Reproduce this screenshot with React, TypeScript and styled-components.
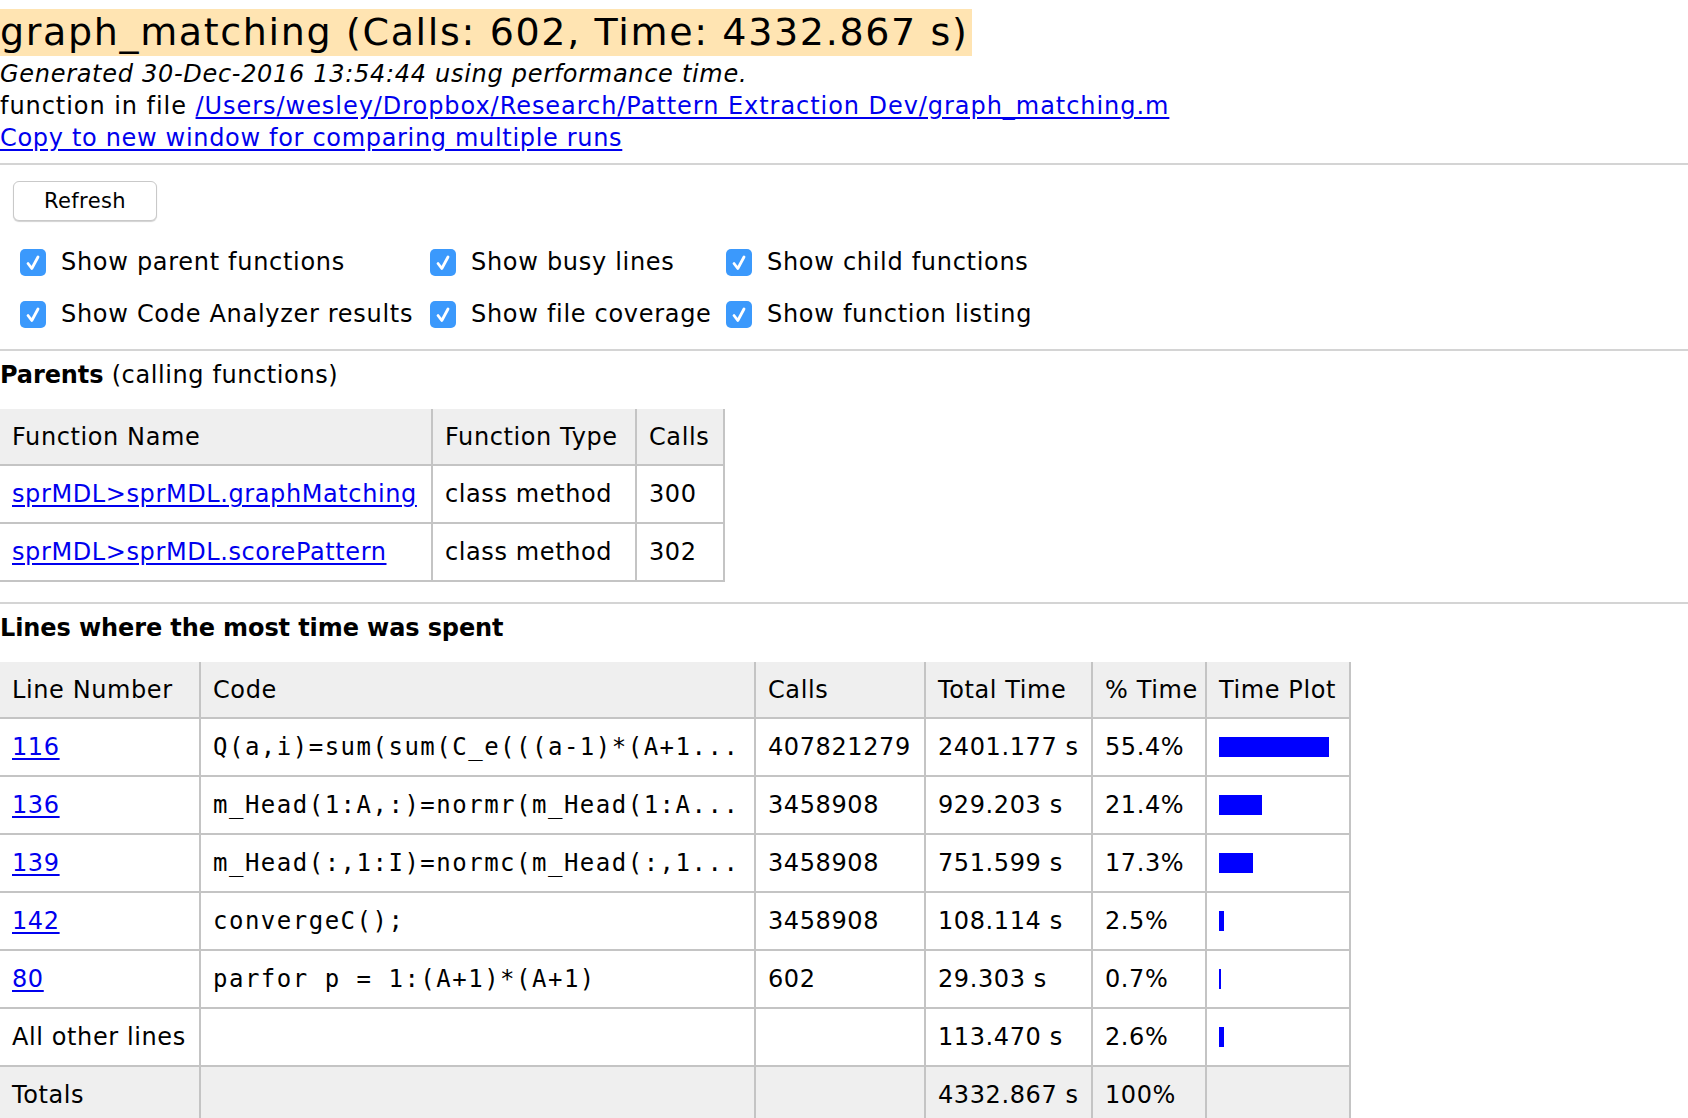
import React from "react";
import styled, { createGlobalStyle } from "styled-components";

const GlobalStyle = createGlobalStyle`
  html, body {
    margin: 0;
    padding: 0;
    background: #ffffff;
  }
  body {
    font-family: "DejaVu Sans", "Lucida Grande", sans-serif;
    font-size: 24px;
    letter-spacing: 0.6px;
    color: #000000;
  }
`;

const Page = styled.div`
  width: 1688px;
`;

const Title = styled.h1`
  margin: 9px 0 2px;
  font-weight: normal;
  font-size: 38px;
  line-height: 47px;
  letter-spacing: 1.65px;
`;

const Highlight = styled.span`
  display: inline-block;
  background: #ffe4b2;
  padding-right: 3px;
`;

const InfoLine = styled.div<{ $italic?: boolean; $spacing?: number }>`
  line-height: 32px;
  font-style: ${(p) => (p.$italic ? "italic" : "normal")};
  letter-spacing: ${(p) => p.$spacing ?? 0.6}px;
  white-space: nowrap;
`;

const Link = styled.a`
  color: #0000ee;
  text-decoration: underline;
  text-underline-offset: 3px;
  cursor: pointer;
`;

const Divider = styled.hr<{ $top?: number }>`
  margin: ${(p) => p.$top ?? 9}px 0 0;
  border: none;
  height: 2px;
  background: #d4d4d4;
`;

const Toolbar = styled.div`
  padding: 16px 0 21px 13px;
`;

const Button = styled.button`
  width: 144px;
  height: 40px;
  background: #ffffff;
  border: 1px solid #c9c9c9;
  border-radius: 6px;
  box-shadow: 0 1px 1px rgba(0, 0, 0, 0.18);
  font-family: "DejaVu Sans", sans-serif;
  font-size: 21px;
  letter-spacing: 0.4px;
  color: #000;
  padding: 0;
`;

const Options = styled.div`
  margin: 27px 0 0 7px;
  display: grid;
  grid-template-columns: 410px 296px auto;
  grid-auto-rows: 28px;
  row-gap: 24px;
`;

const Option = styled.label`
  display: flex;
  align-items: center;
  gap: 15px;
  white-space: nowrap;
  letter-spacing: 0.7px;
`;

const CheckBox = () => (
  <svg width="26" height="27" viewBox="0 0 26 27" aria-hidden>
    <rect x="0" y="0" width="26" height="27" rx="5" fill="#3b99fc" />
    <path
      d="M8 14.5 L11.8 19.5 L18 8"
      fill="none"
      stroke="#ffffff"
      strokeWidth="2.8"
      strokeLinecap="round"
      strokeLinejoin="round"
    />
  </svg>
);

const SectionHeading = styled.div`
  margin: 8px 0 18px;
  line-height: 32px;
  white-space: nowrap;
`;

const Bold = styled.b`
  font-weight: bold;
  letter-spacing: -0.1px;
`;

const Table = styled.table<{ $width: number }>`
  border-collapse: collapse;
  table-layout: fixed;
  width: ${(p) => p.$width}px;
`;

const HeadCell = styled.th`
  background: #efefef;
  font-weight: normal;
  text-align: left;
  padding: 0 2px 0 12px;
  height: 55px;
  border-right: 2px solid #c4c4c4;
  border-bottom: 2px solid #c4c4c4;
  white-space: nowrap;
  overflow: hidden;
`;

const Cell = styled.td<{ $mono?: boolean; $shade?: boolean }>`
  padding: 0 2px 0 12px;
  height: 56px;
  border-right: 2px solid #c4c4c4;
  border-bottom: 2px solid #c4c4c4;
  white-space: nowrap;
  overflow: hidden;
  background: ${(p) => (p.$shade ? "#efefef" : "transparent")};
  font-family: ${(p) =>
    p.$mono ? '"DejaVu Sans Mono", "Liberation Mono", monospace' : "inherit"};
  letter-spacing: ${(p) => (p.$mono ? "1.5px" : "0.6px")};
`;

const Bar = styled.div`
  height: 20px;
  background: #0000ff;
`;

const parents = [
  { name: "sprMDL>sprMDL.graphMatching", type: "class method", calls: "300" },
  { name: "sprMDL>sprMDL.scorePattern", type: "class method", calls: "302" },
];

const lines = [
  { line: "116", code: "Q(a,i)=sum(sum(C_e(((a-1)*(A+1...", calls: "407821279", time: "2401.177 s", pct: 55.4 },
  { line: "136", code: "m_Head(1:A,:)=normr(m_Head(1:A...", calls: "3458908", time: "929.203 s", pct: 21.4 },
  { line: "139", code: "m_Head(:,1:I)=normc(m_Head(:,1...", calls: "3458908", time: "751.599 s", pct: 17.3 },
  { line: "142", code: "convergeC();", calls: "3458908", time: "108.114 s", pct: 2.5 },
  { line: "80", code: "parfor p = 1:(A+1)*(A+1)", calls: "602", time: "29.303 s", pct: 0.7 },
];

export default function App() {
  return (
    <Page>
      <GlobalStyle />
      <Title>
        <Highlight>graph_matching (Calls: 602, Time: 4332.867 s)</Highlight>
      </Title>
      <InfoLine $italic $spacing={0.7}>
        Generated 30-Dec-2016 13:54:44 using performance time.
      </InfoLine>
      <InfoLine $spacing={0.95}>
        function in file{" "}
        <Link>/Users/wesley/Dropbox/Research/Pattern Extraction Dev/graph_matching.m</Link>
      </InfoLine>
      <InfoLine $spacing={0.68}>
        <Link>Copy to new window for comparing multiple runs</Link>
      </InfoLine>
      <Divider />
      <Toolbar>
        <Button>Refresh</Button>
        <Options>
          <Option><CheckBox />Show parent functions</Option>
          <Option><CheckBox />Show busy lines</Option>
          <Option><CheckBox />Show child functions</Option>
          <Option><CheckBox />Show Code Analyzer results</Option>
          <Option><CheckBox />Show file coverage</Option>
          <Option><CheckBox />Show function listing</Option>
        </Options>
      </Toolbar>
      <Divider $top={0} />
      <SectionHeading>
        <Bold>Parents</Bold> (calling functions)
      </SectionHeading>
      <Table $width={724}>
        <colgroup>
          <col style={{ width: 432 }} />
          <col style={{ width: 204 }} />
          <col style={{ width: 88 }} />
        </colgroup>
        <thead>
          <tr>
            <HeadCell>Function Name</HeadCell>
            <HeadCell>Function Type</HeadCell>
            <HeadCell>Calls</HeadCell>
          </tr>
        </thead>
        <tbody>
          {parents.map((p) => (
            <tr key={p.name}>
              <Cell><Link>{p.name}</Link></Cell>
              <Cell>{p.type}</Cell>
              <Cell>{p.calls}</Cell>
            </tr>
          ))}
        </tbody>
      </Table>
      <Divider $top={20} />
      <SectionHeading>
        <Bold>Lines where the most time was spent</Bold>
      </SectionHeading>
      <Table $width={1350}>
        <colgroup>
          <col style={{ width: 200 }} />
          <col style={{ width: 555 }} />
          <col style={{ width: 170 }} />
          <col style={{ width: 167 }} />
          <col style={{ width: 114 }} />
          <col style={{ width: 144 }} />
        </colgroup>
        <thead>
          <tr>
            <HeadCell>Line Number</HeadCell>
            <HeadCell>Code</HeadCell>
            <HeadCell>Calls</HeadCell>
            <HeadCell>Total Time</HeadCell>
            <HeadCell>% Time</HeadCell>
            <HeadCell>Time Plot</HeadCell>
          </tr>
        </thead>
        <tbody>
          {lines.map((l) => (
            <tr key={l.line}>
              <Cell><Link>{l.line}</Link></Cell>
              <Cell $mono>{l.code}</Cell>
              <Cell>{l.calls}</Cell>
              <Cell>{l.time}</Cell>
              <Cell>{l.pct}%</Cell>
              <Cell>
                <Bar style={{ width: Math.max(2, Math.round(l.pct * 1.99)) }} />
              </Cell>
            </tr>
          ))}
          <tr>
            <Cell>All other lines</Cell>
            <Cell />
            <Cell />
            <Cell>113.470 s</Cell>
            <Cell>2.6%</Cell>
            <Cell>
              <Bar style={{ width: Math.round(2.6 * 1.99) }} />
            </Cell>
          </tr>
          <tr>
            <Cell $shade>Totals</Cell>
            <Cell $shade />
            <Cell $shade />
            <Cell $shade>4332.867 s</Cell>
            <Cell $shade>100%</Cell>
            <Cell $shade />
          </tr>
        </tbody>
      </Table>
    </Page>
  );
}
